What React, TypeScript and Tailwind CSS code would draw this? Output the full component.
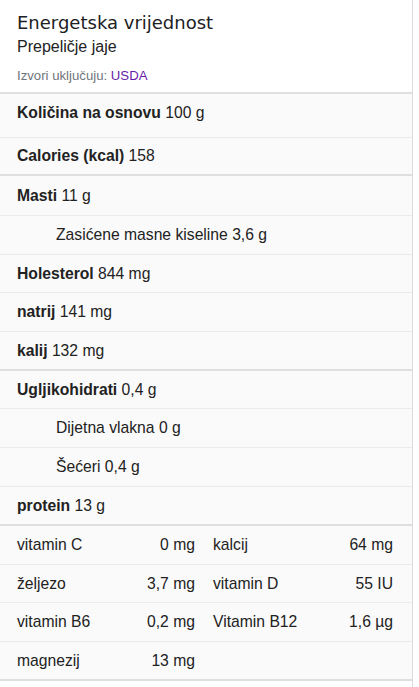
import React from "react";

type Row = {
  label: string;
  value: string;
  bold?: boolean;
  indent?: boolean;
  h: string;
  thick?: boolean;
};

const ROWS: Row[] = [
  { label: "Calories (kcal)", value: "158", bold: true, h: "h-[38px]", thick: true },
  { label: "Masti", value: "11 g", bold: true, h: "h-[40px]" },
  { label: "Zasićene masne kiseline", value: "3,6 g", indent: true, h: "h-[39px]" },
  { label: "Holesterol", value: "844 mg", bold: true, h: "h-[38px]" },
  { label: "natrij", value: "141 mg", bold: true, h: "h-[39px]" },
  { label: "kalij", value: "132 mg", bold: true, h: "h-[39px]", thick: true },
  { label: "Ugljikohidrati", value: "0,4 g", bold: true, h: "h-[38px]" },
  { label: "Dijetna vlakna", value: "0 g", indent: true, h: "h-[39px]" },
  { label: "Šećeri", value: "0,4 g", indent: true, h: "h-[39px]" },
  { label: "protein", value: "13 g", bold: true, h: "h-[39px]", thick: true },
];

const MINERALS: { cells: [string, string][]; h: string; last?: boolean }[] = [
  { cells: [["vitamin C", "0 mg"], ["kalcij", "64 mg"]], h: "h-[39px]" },
  { cells: [["željezo", "3,7 mg"], ["vitamin D", "55 IU"]], h: "h-[38px]" },
  { cells: [["vitamin B6", "0,2 mg"], ["Vitamin B12", "1,6 µg"]], h: "h-[39px]" },
  { cells: [["magnezij", "13 mg"]], h: "h-[39px]", last: true },
];

export default function App() {
  return (
    <div className="min-h-screen bg-white font-['Liberation_Sans',Arial,sans-serif] text-[#222]">
      <div className="min-h-[687px] w-[413px] border-r border-[#dadce0]">
        {/* zaglavlje */}
        <div className="h-[94px] border-b-2 border-[#dfdfdf] bg-white px-[17px] pt-[10px]">
          <h1 className="font-['DejaVu_Sans',sans-serif] text-[18px] leading-[25px] text-[#202124]">
            Energetska vrijednost
          </h1>
          <div className="mt-[2px] text-[16px] leading-[20px] text-[#222]">Prepeličje jaje</div>
          <div className="mt-[11px] text-[13.2px] leading-[16px] text-[#70757a]">
            Izvori uključuju: <span className="text-[#681da8]">USDA</span>
          </div>
        </div>

        <div className="bg-[#fafafa]">
          <div className="flex h-[44px] items-center border-b border-[#ebebeb] pb-[5px] pl-[17px] text-[15.7px]">
            <span>
              <b className="font-bold">Količina na osnovu</b> 100 g
            </span>
          </div>

          {ROWS.map((r) => (
            <div
              key={r.label}
              className={[
                "flex items-center text-[15.7px]",
                r.h,
                r.indent ? "pl-[56px]" : "pl-[17px]",
                r.thick ? "border-b-2 border-[#dfdfdf]" : "border-b border-[#ebebeb]",
              ].join(" ")}
            >
              <span>
                {r.bold ? <b className="font-bold">{r.label}</b> : r.label} {r.value}
              </span>
            </div>
          ))}

          {MINERALS.map((row, i) => (
            <div
              key={i}
              className={[
                "grid grid-cols-2 items-center text-[15.7px]",
                row.h,
                row.last ? "border-b-2 border-[#dfdfdf]" : "border-b border-[#ebebeb]",
              ].join(" ")}
            >
              {row.cells.map(([label, value], j) => (
                <div
                  key={label}
                  className={[
                    "flex items-center justify-between",
                    j === 0 ? "pl-[17px] pr-[11px]" : "pl-[7px] pr-[19px]",
                  ].join(" ")}
                >
                  <span>{label}</span>
                  <span>{value}</span>
                </div>
              ))}
            </div>
          ))}
        </div>
      </div>
    </div>
  );
}
